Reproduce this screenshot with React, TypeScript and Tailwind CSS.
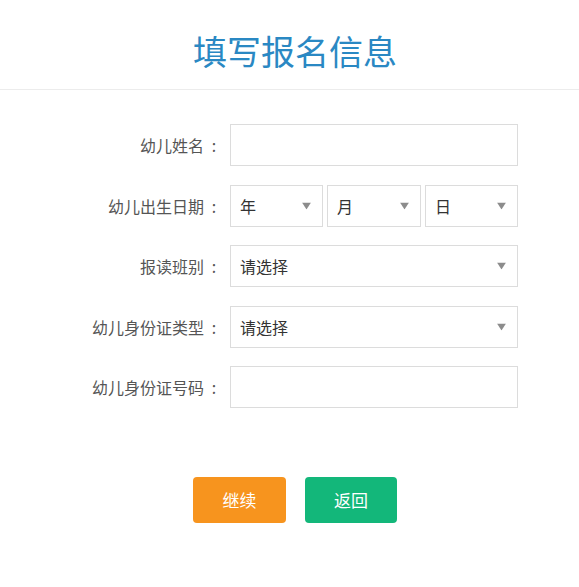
const font = "font-['Microsoft_YaHei','Noto_Sans_CJK_SC',sans-serif]";

function Arrow() {
  return (
    <svg width="9" height="7" viewBox="0 0 9 7" className="absolute right-[11px] top-1/2 -translate-y-1/2">
      <path d="M0 0 H9 L4.5 7 Z" fill="#8c8c8c" />
    </svg>
  );
}

function SelectBox({ text, className }: { text: string; className: string }) {
  return (
    <div className={`relative h-[42px] border border-[#dcdcdc] bg-white ${className}`}>
      <span className="absolute left-[9px] top-1/2 -translate-y-1/2 text-[16px] text-[#333]">{text}</span>
      <Arrow />
    </div>
  );
}

function Row({ label, children }: { label: string; children: React.ReactNode }) {
  return (
    <div className="flex items-center">
      <div className="w-[224px] flex justify-end text-[16px] text-[#555]">
        <span>{label}</span>
        <span className="w-[20px] text-center">:</span>
      </div>
      <div className="ml-[6px] w-[288px] flex">{children}</div>
    </div>
  );
}

export default function App() {
  return (
    <div className={`w-[579px] h-[587px] bg-white ${font}`}>
      {/* Header */}
      <div className="h-[90px] border-b border-[#ececec] flex items-center justify-center">
        <h1 className="text-[34px] text-[#2a88c3] mt-[12px] pl-[11px]">填写报名信息</h1>
      </div>

      {/* Form */}
      <div className="pt-[34px] flex flex-col gap-[18.5px]">
        <Row label="幼儿姓名">
          <div className="h-[42px] w-full border border-[#dcdcdc]" />
        </Row>
        <Row label="幼儿出生日期">
          <div className="flex w-full gap-[4px]">
            <SelectBox text="年" className="w-[93px]" />
            <SelectBox text="月" className="w-[94px]" />
            <SelectBox text="日" className="w-[93px]" />
          </div>
        </Row>
        <Row label="报读班别">
          <SelectBox text="请选择" className="w-full" />
        </Row>
        <Row label="幼儿身份证类型">
          <SelectBox text="请选择" className="w-full" />
        </Row>
        <Row label="幼儿身份证号码">
          <div className="h-[42px] w-full border border-[#dcdcdc]" />
        </Row>
      </div>

      {/* Buttons */}
      <div className="mt-[69px] flex justify-center gap-[19px] pl-[11px]">
        <button className="w-[93px] h-[46px] rounded-[4px] bg-[#f7941e] text-white text-[17px]">继续</button>
        <button className="w-[92px] h-[46px] rounded-[4px] bg-[#13b77a] text-white text-[17px]">返回</button>
      </div>
    </div>
  );
}
